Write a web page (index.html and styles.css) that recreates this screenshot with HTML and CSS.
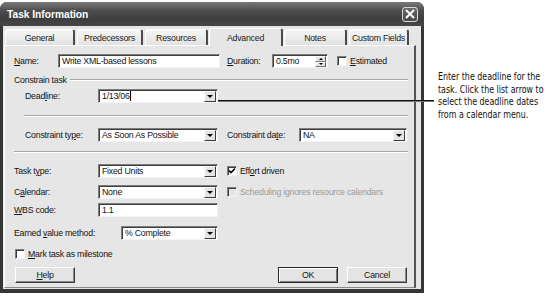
FILE: index.html
```html
<!DOCTYPE html>
<html>
<head>
<meta charset="utf-8">
<link rel="stylesheet" href="styles.css">
</head>
<body>
<div class="page">
  <div class="dialog">
    <div class="titlebar">
      <span class="title">Task Information</span>
      <span class="close"><svg width="10" height="10" viewBox="0 0 10 10"><path d="M1 1 L9 9 M9 1 L1 9" stroke="#fff" stroke-width="2" fill="none"/></svg></span>
    </div>
    <div class="body">
      <div class="tabs">
        <div class="tab w-general">General</div>
        <div class="tab w-pred">Predecessors</div>
        <div class="tab w-res">Resources</div>
        <div class="tab active w-adv">Advanced</div>
        <div class="tab w-notes">Notes</div>
        <div class="tab w-custom">Custom Fields</div>
      </div>
      <div class="panel">
        <div class="row r-name">
          <span class="lbl l-name"><u>N</u>ame:</span>
          <span class="field f-name">Write XML-based lessons</span>
          <span class="lbl l-dur"><u>D</u>uration:</span>
          <span class="field f-dur">0.5mo<span class="spin"><span class="sp up"></span><span class="sp down"></span></span></span>
          <span class="check c-est"><span class="cb"></span><span><u>E</u>stimated</span></span>
        </div>
        <div class="group">
          <span class="gl">Constrain task</span>
          <span class="gline"></span>
        </div>
        <div class="row r-dead indent">
          <span class="lbl l-ind">Dead<u>l</u>ine:</span>
          <span class="field sel w120"><span class="caret">1/13/06</span><span class="dd"></span></span>
        </div>
        <div class="sep s1"></div>
        <div class="row r-ctype indent">
          <span class="lbl l-ind">Constraint ty<u>p</u>e:</span>
          <span class="field sel w120">As Soon As Possible<span class="dd"></span></span>
          <span class="lbl l-cdate">Constraint da<u>t</u>e:</span>
          <span class="field sel w108">NA<span class="dd"></span></span>
        </div>
        <div class="sep s2"></div>
        <div class="row r-ttype">
          <span class="lbl l-main">Task t<u>y</u>pe:</span>
          <span class="field sel w120">Fixed Units<span class="dd"></span></span>
          <span class="check c-side"><span class="cb checked"><svg width="8" height="8" viewBox="0 0 8 8"><path d="M1 3.5 L3 5.5 L7 1.5" stroke="#000" stroke-width="1.6" fill="none"/></svg></span><span>Eff<u>o</u>rt driven</span></span>
        </div>
        <div class="row r-cal">
          <span class="lbl l-main">C<u>a</u>lendar:</span>
          <span class="field sel w120">None<span class="dd"></span></span>
          <span class="check c-side disabled"><span class="cb"></span><span>Scheduling ignores resource calendars</span></span>
        </div>
        <div class="row r-wbs">
          <span class="lbl l-main"><u>W</u>BS code:</span>
          <span class="field w120">1.1</span>
        </div>
        <div class="row r-ev">
          <span class="lbl l-ev">Earned <u>v</u>alue method:</span>
          <span class="field sel w97">% Complete<span class="dd"></span></span>
        </div>
        <div class="row r-ms">
          <span class="check c-ms"><span class="cb"></span><span><u>M</u>ark task as milestone</span></span>
        </div>
        <div class="buttons">
          <span class="btn"><span><u>H</u>elp</span></span>
          <span class="btn default">OK</span>
          <span class="btn">Cancel</span>
        </div>
      </div>
    </div>
  </div>
  <div class="note">
    <span class="nl">Enter the deadline for the</span>
    <span class="nl">task. Click the list arrow to</span>
    <span class="nl">select the deadline dates</span>
    <span class="nl">from a calendar menu.</span>
  </div>
  <div class="leader"></div>
</div>
</body>
</html>
```
FILE: styles.css
```css
* { box-sizing: border-box; }
body {
  margin: 0;
  background: #fff;
  font-family: "Liberation Sans", Arial, sans-serif;
  font-size: 8.8px;
  letter-spacing: -0.25px;
  color: #141414;
}
u { text-decoration: underline; text-underline-offset: 1px; }
.page {
  position: relative;
  width: 550px;
  height: 297px;
  display: flex;
  align-items: flex-start;
}
.dialog {
  margin-top: 2px;
  width: 424px;
  height: 291px;
  background: #363636;
  border-radius: 7px 7px 0 0;
  padding: 0 3px 4px 3px;
  display: flex;
  flex-direction: column;
  flex: none;
}
.titlebar {
  height: 24px;
  margin: 0 -3px;
  padding: 0 6px 0 7px;
  border-radius: 7px 7px 0 0;
  background: linear-gradient(#7a7a7a, #4e4e4e 35%, #3e3e3e 70%, #474747);
  display: flex;
  align-items: center;
  justify-content: space-between;
}
.title {
  color: #fff;
  font-weight: bold;
  font-size: 10.2px;
  letter-spacing: 0;
}
.close {
  width: 16px;
  height: 15px;
  border: 1px solid #d8d8d8;
  border-radius: 3px;
  background: linear-gradient(#6a6a6a, #4a4a4a);
  display: flex;
  align-items: center;
  justify-content: center;
}
.body {
  flex: 1;
  background: #e6e6e6;
  padding: 2px 5px 1px 1px;
  display: flex;
  flex-direction: column;
}
.tabs {
  display: flex;
  align-items: flex-end;
  height: 17px;
  padding-left: 1px;
  gap: 2px;
  position: relative;
  z-index: 1;
}
.tab {
  height: 16px;
  border-top: 1px solid #fff;
  border-left: 1px solid #fff;
  border-right: 2px solid #4a4a4a;
  border-radius: 3px 3px 0 0;
  background: linear-gradient(#f6f6f6, #e2e2e2);
  display: flex;
  align-items: center;
  justify-content: center;
  color: #222;
  white-space: nowrap;
  padding-top: 1px;
}
.tab.active {
  height: 18px;
  margin: 0 -1px -1px;
  background: #e6e6e6;
}
.w-general { width: 70px; }
.w-pred { width: 66px; }
.w-res { width: 63px; }
.w-adv { width: 74px; }
.w-notes { width: 63px; }
.w-custom { width: 60px; }
.panel {
  flex: 1;
  border-top: 1px solid #fff;
  border-left: 1px solid #fff;
  border-right: 2px solid #555;
  border-bottom: 1px solid #8a8a8a;
  padding: 8px 6px 4px 9px;
  display: flex;
  flex-direction: column;
}
.row {
  display: flex;
  align-items: center;
  height: 14px;
  flex: none;
}
.indent { padding-left: 11px; }
.lbl { flex: none; white-space: nowrap; }
.l-name { width: 44px; }
.l-dur { width: 45px; margin-left: 7px; }
.l-ind { width: 73px; }
.l-main { width: 84px; }
.l-cdate { width: 72px; margin-left: 9px; }
.l-ev { width: 107px; }
.field {
  position: relative;
  height: 14px;
  flex: none;
  background: #fff;
  border-top: 1px solid #7e7e7e;
  border-left: 1px solid #7e7e7e;
  border-right: 1px solid #f4f4f4;
  border-bottom: 1px solid #f4f4f4;
  box-shadow: inset 1px 1px 0 #3e3e3e;
  padding: 0 0 0 3px;
  display: flex;
  align-items: center;
  white-space: nowrap;
}
.f-name { width: 162px; }
.f-dur { width: 56px; }
.w120 { width: 120px; }
.w108 { width: 108px; }
.w97 { width: 97px; }
.caret { border-right: 1px solid #000; }
.dd {
  position: absolute;
  right: 1px;
  top: 1px;
  width: 12px;
  height: 11px;
  background: #e4e4e4;
  border-top: 1px solid #fbfbfb;
  border-left: 1px solid #fbfbfb;
  border-right: 1px solid #3c3c3c;
  border-bottom: 1px solid #3c3c3c;
  display: flex;
  align-items: center;
  justify-content: center;
}
.dd::after {
  content: "";
  border-top: 3px solid #000;
  border-left: 3px solid transparent;
  border-right: 3px solid transparent;
}
.spin {
  position: absolute;
  right: 1px;
  top: 1px;
  width: 11px;
  height: 11px;
  display: flex;
  flex-direction: column;
}
.sp {
  flex: 1;
  background: #e4e4e4;
  border-right: 1px solid #555;
  border-bottom: 1px solid #777;
  border-top: 1px solid #fff;
  border-left: 1px solid #fff;
  display: flex;
  align-items: center;
  justify-content: center;
}
.sp.up::after {
  content: "";
  border-bottom: 2px solid #000;
  border-left: 2px solid transparent;
  border-right: 2px solid transparent;
}
.sp.down::after {
  content: "";
  border-top: 2px solid #000;
  border-left: 2px solid transparent;
  border-right: 2px solid transparent;
}
.check {
  display: flex;
  align-items: center;
  gap: 3px;
  white-space: nowrap;
  flex: none;
}
.c-est { margin-left: 9px; }
.c-side { margin-left: 9px; }
.cb {
  width: 10px;
  height: 10px;
  background: #fff;
  border-top: 1px solid #7e7e7e;
  border-left: 1px solid #7e7e7e;
  border-right: 1px solid #f4f4f4;
  border-bottom: 1px solid #f4f4f4;
  box-shadow: inset 1px 1px 0 #3e3e3e;
  display: flex;
  align-items: center;
  justify-content: center;
  flex: none;
}
.disabled { color: #9a9a9a; }
.disabled .cb { background: #e6e6e6; }
.group {
  display: flex;
  align-items: center;
  height: 12px;
  margin-top: 6px;
  flex: none;
}
.gl { white-space: nowrap; margin-right: 3px; }
.gline {
  flex: 1;
  height: 2px;
  border-top: 1px solid #a8a8a8;
  border-bottom: 1px solid #fff;
}
.r-dead { margin-top: 3px; }
.sep {
  height: 2px;
  flex: none;
  border-top: 1px solid #a8a8a8;
  border-bottom: 1px solid #fff;
}
.s1 { margin: 12px 0 0 10px; }
.r-ctype { margin-top: 11px; }
.s2 { margin-top: 9px; }
.r-ttype { margin-top: 11px; }
.r-cal { margin-top: 7px; }
.r-wbs { margin-top: 4px; }
.r-ev { margin-top: 9px; }
.r-ms { margin-top: 8px; height: 11px; }
.c-ms { margin-left: 1px; }
.buttons {
  display: flex;
  margin-top: 8px;
  gap: 9px;
  padding: 0 1px;
  flex: none;
}
.btn {
  width: 60px;
  height: 16px;
  background: #e4e4e4;
  border-top: 1px solid #fff;
  border-left: 1px solid #fff;
  border-right: 1px solid #3a3a3a;
  border-bottom: 1px solid #3a3a3a;
  box-shadow: inset -1px -1px 0 #8a8a8a;
  display: flex;
  align-items: center;
  justify-content: center;
}
.btn.default {
  margin-left: auto;
  border: 1px solid #2a2a2a;
  box-shadow: inset 1px 1px 0 #fff, inset -1px -1px 0 #7a7a7a;
}
.note {
  margin: 71px 0 0 14px;
  display: flex;
  flex-direction: column;
  font-family: "DejaVu Sans", "Liberation Sans", sans-serif;
  font-stretch: condensed;
  font-size: 11px;
  letter-spacing: 0;
  line-height: 12.7px;
  color: #111;
  white-space: nowrap;
}
.nl {
  display: block;
  transform: scaleX(0.8);
  transform-origin: 0 50%;
}
.leader {
  position: absolute;
  left: 218px;
  top: 100px;
  width: 216px;
  height: 1px;
  background: #111;
  box-shadow: 0 1px 0 #777;
}
```
